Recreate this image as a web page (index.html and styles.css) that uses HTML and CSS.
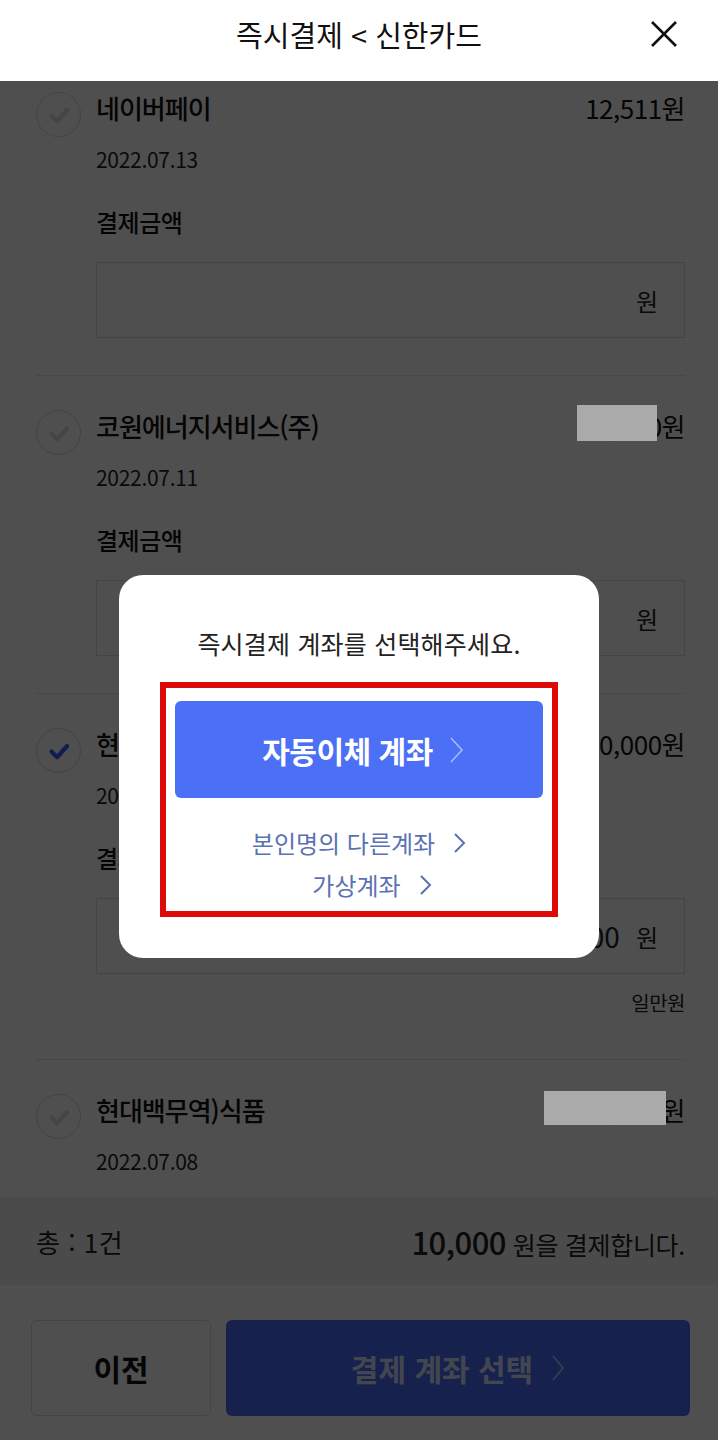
FILE: index.html
```html
<!DOCTYPE html>
<html lang="ko">
<head>
  <meta charset="UTF-8">
  <meta name="viewport" content="width=device-width, initial-scale=1.0">
  <title>즉시결제</title>
  <link rel="stylesheet" href="styles.css">
</head>
<body>
<div class="app">
  <header class="header">
    <h1 class="header-title">즉시결제 &lt; 신한카드</h1>
    <button class="close-btn" aria-label="닫기">
      <svg width="28" height="28" viewBox="0 0 28 28"><path d="M2 2 L26 26 M26 2 L2 26" stroke="#111" stroke-width="2.6" fill="none"/></svg>
    </button>
  </header>

  <main class="list">
    <div class="item item-first">
      <span class="check"><svg viewBox="0 0 24 24"><path d="M6 12.5 L10.5 17 L18.5 8" /></svg></span>
      <div class="item-body">
        <div class="item-row">
          <span class="item-name">네이버페이</span>
          <span class="item-amount">12,511원</span>
        </div>
        <div class="item-date">2022.07.13</div>
        <div class="item-label">결제금액</div>
        <div class="amount-input"><span class="input-value"></span><span>원</span></div>
      </div>
    </div>

    <div class="item">
      <span class="check"><svg viewBox="0 0 24 24"><path d="M6 12.5 L10.5 17 L18.5 8" /></svg></span>
      <div class="item-body">
        <div class="item-row">
          <span class="item-name">코원에너지서비스(주)</span>
          <span class="item-amount">48,250원<span class="mask mask-a"></span></span>
        </div>
        <div class="item-date">2022.07.11</div>
        <div class="item-label">결제금액</div>
        <div class="amount-input"><span class="input-value"></span><span>원</span></div>
      </div>
    </div>

    <div class="item">
      <span class="check checked"><svg viewBox="0 0 24 24"><path d="M6 12.5 L10.5 17 L18.5 8" /></svg></span>
      <div class="item-body">
        <div class="item-row">
          <span class="item-name">현대카드결제</span>
          <span class="item-amount">10,000원</span>
        </div>
        <div class="item-date">2022.07.10</div>
        <div class="item-label">결제금액</div>
        <div class="amount-input"><span class="input-value">10,000</span><span>원</span></div>
        <div class="item-note">일만원</div>
      </div>
    </div>

    <div class="item">
      <span class="check"><svg viewBox="0 0 24 24"><path d="M6 12.5 L10.5 17 L18.5 8" /></svg></span>
      <div class="item-body">
        <div class="item-row">
          <span class="item-name">현대백무역)식품</span>
          <span class="item-amount">126,400원<span class="mask mask-b"></span></span>
        </div>
        <div class="item-date">2022.07.08</div>
      </div>
    </div>
  </main>

  <footer class="footer">
    <div class="summary">
      <span class="summary-count">총 : 1건</span>
      <span class="summary-total"><strong>10,000</strong> 원을 결제합니다.</span>
    </div>
    <div class="actions">
      <button class="btn btn-prev">이전</button>
      <button class="btn btn-next">결제 계좌 선택
        <svg class="chev" width="14" height="28" viewBox="0 0 14 28"><path d="M2 2 L12 14 L2 26" /></svg>
      </button>
    </div>
  </footer>

  <div class="dim">
    <div class="modal">
      <p class="modal-title">즉시결제 계좌를 선택해주세요.</p>
      <div class="highlight">
        <button class="auto-btn">자동이체 계좌
          <svg class="chev" width="15" height="28" viewBox="0 0 15 28"><path d="M2 2 L13 14 L2 26" /></svg>
        </button>
        <a class="link" href="#">본인명의 다른계좌
          <svg class="chev" width="13" height="22" viewBox="0 0 13 22"><path d="M2 2 L11 11 L2 20" /></svg>
        </a>
        <a class="link" href="#">가상계좌
          <svg class="chev" width="13" height="22" viewBox="0 0 13 22"><path d="M2 2 L11 11 L2 20" /></svg>
        </a>
      </div>
    </div>
  </div>
</div>
</body>
</html>
```

FILE: styles.css
```css
* {
  margin: 0;
  padding: 0;
  box-sizing: border-box;
}

body {
  font-family: 'Noto Sans CJK KR', 'Noto Sans', sans-serif;
  background: #fff;
  color: #111;
}

.app {
  height: 1440px;
  display: flex;
  flex-direction: column;
  overflow: hidden;
}

.header {
  height: 81px;
  flex-shrink: 0;
  display: flex;
  justify-content: center;
  padding-top: 13px;
  position: relative;
  background: #fff;
}

.header-title {
  font-size: 29px;
  font-weight: 400;
  line-height: 42px;
  letter-spacing: 0;
  color: #111;
}

.close-btn {
  position: absolute;
  right: 40px;
  top: 20px;
  border: none;
  background: none;
}

.list {
  flex: 1;
  overflow: hidden;
}

.item {
  display: flex;
  gap: 15px;
  align-items: flex-start;
  margin: 0 33px 0 36px;
  padding: 33px 0 37px;
  border-bottom: 1px solid #e6e6e6;
}

.item-first {
  padding-top: 10px;
}

.check {
  width: 45px;
  height: 45px;
  flex-shrink: 0;
  border: 1.5px solid #d8d8d8;
  border-radius: 50%;
  display: flex;
  align-items: center;
  justify-content: center;
  margin-top: 1px;
}

.check svg {
  width: 30px;
  height: 30px;
  fill: none;
  stroke: #dedede;
  stroke-width: 3.4;
  stroke-linecap: round;
  stroke-linejoin: round;
}

.check.checked svg {
  stroke: #3a5cff;
}

.item-body {
  flex: 1;
}

.item-row {
  display: flex;
  justify-content: space-between;
  height: 34px;
  line-height: 34px;
  font-size: 26px;
  font-weight: 500;
}

.item-name {
  letter-spacing: -1px;
}

.item-amount {
  position: relative;
  font-weight: 400;
  letter-spacing: -0.5px;
}

.mask {
  position: absolute;
  z-index: 5;
  background: #aaa;
}

.mask-a {
  right: 28px;
  top: -4px;
  width: 80px;
  height: 36px;
}

.mask-b {
  right: 19px;
  top: -2px;
  width: 122px;
  height: 34px;
}

.item-date {
  margin-top: 22px;
  height: 24px;
  font-size: 21px;
  line-height: 24px;
  letter-spacing: -0.3px;
  color: #222;
}

.item-label {
  margin-top: 36px;
  height: 30px;
  font-size: 24px;
  line-height: 30px;
  font-weight: 500;
  letter-spacing: -0.5px;
}

.amount-input {
  margin-top: 25px;
  height: 76px;
  border: 1.5px solid #dcdcdc;
  display: flex;
  align-items: center;
  justify-content: flex-end;
  gap: 16px;
  padding-right: 26px;
  font-size: 24px;
  color: #222;
}

.input-value {
  font-size: 28px;
}

.item-note {
  margin-top: 17px;
  margin-bottom: 7px;
  height: 24px;
  text-align: right;
  font-size: 20px;
  line-height: 24px;
  letter-spacing: -0.5px;
  color: #222;
}

.footer {
  flex-shrink: 0;
}

.summary {
  height: 88px;
  background: #f1f1f1;
  display: flex;
  justify-content: space-between;
  align-items: center;
  padding: 0 33px 0 36px;
  font-size: 25px;
  color: #222;
}

.summary-count {
  font-size: 26px;
  letter-spacing: 0.5px;
}

.summary-total {
  letter-spacing: -0.3px;
}

.summary-total strong {
  font-size: 31px;
  font-weight: 500;
  letter-spacing: -0.5px;
}

.actions {
  display: flex;
  gap: 15px;
  padding: 35px 28px 24px 31px;
}

.btn {
  height: 96px;
  border-radius: 6px;
  font-family: inherit;
  font-size: 30px;
  font-weight: 700;
  display: flex;
  align-items: center;
  justify-content: center;
}

.btn-prev {
  width: 180px;
  background: #fff;
  border: 1.5px solid #dadada;
  color: #111;
}

.btn-next {
  flex: 1;
  border: none;
  background: #4a6cf7;
  color: #d6e0ff;
  gap: 18px;
}

.chev {
  fill: none;
  stroke-width: 1.8;
}

.btn-next .chev {
  stroke: #b8c6ff;
}

.dim {
  position: fixed;
  top: 81px;
  left: 0;
  right: 0;
  bottom: 0;
  z-index: 2;
  background: rgba(0, 0, 0, 0.69);
  display: flex;
  justify-content: center;
  align-items: flex-start;
  padding-top: 494px;
}

.modal {
  position: relative;
  z-index: 10;
  width: 480px;
  background: #fff;
  border-radius: 24px;
  padding: 52px 41px 41px;
  text-align: center;
}

.modal-title {
  font-size: 25px;
  line-height: 32px;
  color: #222;
  letter-spacing: 0.2px;
}

.highlight {
  margin-top: 23px;
  border: 6px solid #dd0a0a;
  padding: 13px 9px 9px;
  display: flex;
  flex-direction: column;
  align-items: center;
}

.auto-btn {
  width: 100%;
  height: 97px;
  border: none;
  border-radius: 6px;
  background: #4b70f5;
  color: #fff;
  font-family: inherit;
  font-size: 30px;
  font-weight: 700;
  letter-spacing: -0.5px;
  display: flex;
  align-items: center;
  justify-content: center;
  gap: 16px;
  padding-left: 8px;
}

.auto-btn .chev {
  stroke: #a9bcff;
  stroke-width: 1.5;
}

.link {
  display: flex;
  align-items: center;
  gap: 18px;
  font-size: 24px;
  line-height: 34px;
  color: #5b72b2;
  text-decoration: none;
  letter-spacing: 0;
}

.link:first-of-type {
  margin-top: 28px;
}

.link + .link {
  margin-top: 8px;
  padding-left: 26px;
}

.link .chev {
  stroke: #5b72b2;
  stroke-width: 2;
}
```
